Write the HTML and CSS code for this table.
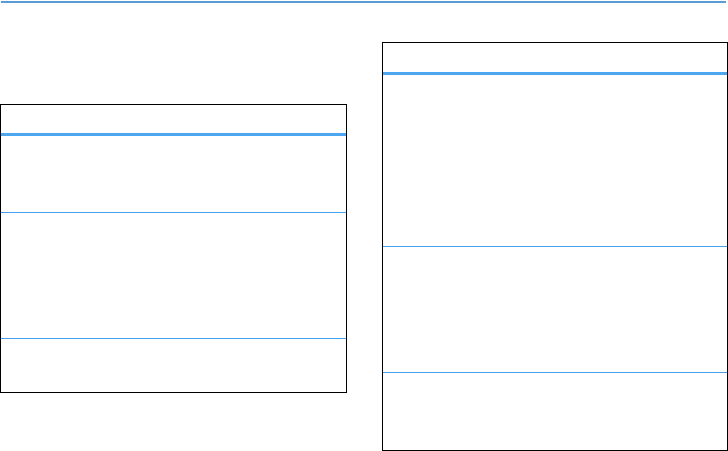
FILE: index.html
```html
<!DOCTYPE html>
<html>
<head>
  <meta charset="UTF-8">
  <title>Tables</title>
  <link rel="stylesheet" href="styles.css">
</head>
<body>
<div class="rule"></div>

<div class="columns">
  <div class="table table-left">
    <div class="head"></div>
    <div class="row row-a"></div>
    <div class="row row-b"></div>
    <div class="row row-c"></div>
  </div>

  <div class="table table-right">
    <div class="head"></div>
    <div class="row row-d"></div>
    <div class="row row-b"></div>
    <div class="row row-e"></div>
  </div>
</div>
</body>
</html>
```

FILE: styles.css
```css
body {
  margin: 0;
  background: #fff;
  font-family: "Liberation Sans", Arial, sans-serif;
}
.rule {
  height: 2px;
  margin: 1px 2px 0 1px;
  background: #5b9bd5;
}
.columns {
  display: flex;
  align-items: flex-start;
  gap: 35px;
  padding-top: 39px;
}
.table {
  border: 1px solid #000;
  box-sizing: border-box;
}
.table-left {
  width: 347px;
  margin-top: 62px;
}
.table-right {
  width: 346px;
}
.head {
  height: 28px;
  border-bottom: 3px solid #4da6f0;
}
.table-right .head {
  height: 29px;
}
.row + .row {
  border-top: 1px solid #45a0f0;
}
.row-a { height: 76px; }
.row-b { height: 125px; }
.row-c { height: 53px; }
.row-d { height: 171px; }
.row-e { height: 77px; }
```
